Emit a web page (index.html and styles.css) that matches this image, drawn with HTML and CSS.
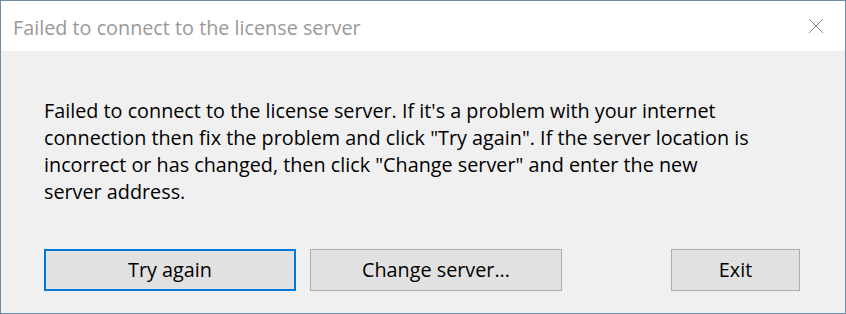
FILE: index.html
```html
<!DOCTYPE html>
<html lang="en">
<head>
  <meta charset="UTF-8" />
  <title>License server</title>
  <link rel="stylesheet" href="styles.css">
</head>
<body>

  <div class="dialog">
    <div class="titlebar">
      <span class="title">Failed to connect to the license server</span>
      <button class="close" aria-label="Close">
        <svg width="16" height="16" viewBox="0 0 16 16">
          <path d="M1 1 L15 15 M15 1 L1 15" stroke="#8a8a8a" stroke-width="1" fill="none" />
        </svg>
      </button>
    </div>

    <div class="content">
      <p class="message">
        Failed to connect to the license server. If it's a problem with your internet<br>
        connection then fix the problem and click "Try again". If the server location is<br>
        incorrect or has changed, then click "Change server" and enter the new<br>
        server address.
      </p>

      <div class="actions">
        <button class="btn btn-default">Try again</button>
        <button class="btn btn-change">Change server...</button>
        <button class="btn btn-exit">Exit</button>
      </div>
    </div>
  </div>

</body>
</html>
```

FILE: styles.css
```css
body {
  margin: 0;
  font-family: "Open Sans", "Noto Sans", sans-serif;
  background: #f0f0f0;
}

.dialog {
  width: 846px;
  height: 314px;
  box-sizing: border-box;
  border: 1px solid #6b8aa5;
  display: flex;
  flex-direction: column;
  background: #f0f0f0;
}

.titlebar {
  height: 50px;
  background: #fff;
  display: flex;
  align-items: center;
  justify-content: space-between;
  padding-left: 12px;
  flex-shrink: 0;
}

.title {
  color: #999;
  font-size: 19.8px;
  margin-top: 3px;
}

.close {
  width: 46px;
  height: 50px;
  border: none;
  background: transparent;
  padding: 0;
  margin-right: 6px;
  display: flex;
  align-items: center;
  justify-content: center;
}

.content {
  flex: 1;
  padding: 46px 45px 0 43px;
}

.message {
  margin: 0;
  font-size: 19.8px;
  line-height: 27px;
  color: #000;
  white-space: nowrap;
}

.actions {
  display: flex;
  margin-top: 44px;
}

.btn {
  height: 42px;
  box-sizing: border-box;
  background: #e1e1e1;
  border: 1px solid #adadad;
  font-family: "Open Sans", "Noto Sans", sans-serif;
  font-size: 19.8px;
  color: #000;
  padding: 0 0 2px;
}

.btn-default {
  width: 252px;
  border: 2px solid #0078d7;
}

.btn-change {
  width: 252px;
  margin-left: 14px;
}

.btn-exit {
  width: 129px;
  margin-left: auto;
}
```
